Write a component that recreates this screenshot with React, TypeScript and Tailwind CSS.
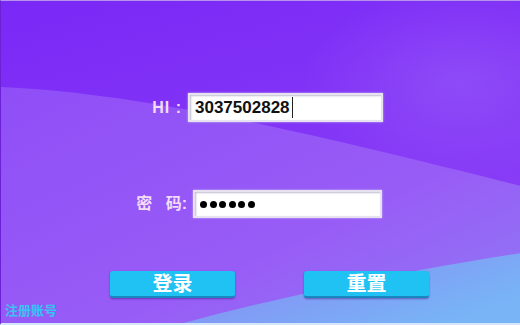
import React from "react";

function Backdrop() {
  return (
    <svg className="absolute inset-0" width="520" height="325" viewBox="0 0 520 325">
      <defs>
        <linearGradient id="bg" x1="0" y1="0" x2="0.4" y2="1">
          <stop offset="0" stopColor="#7a28f6" />
          <stop offset="1" stopColor="#8a40f6" />
        </linearGradient>
        <linearGradient id="wave1" x1="0" y1="0" x2="1" y2="1">
          <stop offset="0" stopColor="#8f4ef7" />
          <stop offset="0.6" stopColor="#985cf6" />
          <stop offset="1" stopColor="#8f7af4" />
        </linearGradient>
        <linearGradient id="wave2" x1="0" y1="0" x2="1" y2="0.6">
          <stop offset="0" stopColor="#8a84f4" />
          <stop offset="1" stopColor="#78b4f6" />
        </linearGradient>
        <radialGradient id="haze" cx="0.88" cy="0.25" r="0.3">
          <stop offset="0" stopColor="#9a60f8" stopOpacity="0.5" />
          <stop offset="1" stopColor="#9a60f8" stopOpacity="0" />
        </radialGradient>
      </defs>
      <rect width="520" height="325" fill="url(#bg)" />
      <rect width="520" height="325" fill="url(#haze)" />
      <path d="M0 86 C140 92 300 130 520 185 L520 325 L0 325 Z" fill="url(#wave1)" />
      <path d="M172 325 C260 300 400 270 520 252 L520 325 Z" fill="url(#wave2)" />
    </svg>
  );
}

export default function App() {
  const sans = { fontFamily: '"Liberation Sans", Arial, "Noto Sans CJK SC", sans-serif' };
  return (
    <div
      className="relative w-[520px] h-[325px] overflow-hidden border-t border-t-[#b493ea] border-b-2 border-b-[#d6e6fa] border-l border-l-[#6a22d4]"
      style={sans}
    >
      <Backdrop />
      <div className="relative flex flex-col pt-[92px]">
        <div className="flex items-center">
          <div className="w-[187px] pr-[6px] text-right text-[16px] font-bold text-[#f2dcf8] tracking-[1px]">HI :</div>
          <div className="w-[195px] h-[29px] bg-white border-2 border-[#e6e2f0] shadow-[0_0_2px_#c8b8f0,inset_1px_1px_2px_#c0bcd0] flex items-center pl-[5px]">
            <span className="text-[17px] font-bold text-[#111] leading-none">3037502828</span>
            <span className="ml-[2px] w-px h-[21px] bg-[#222]" />
          </div>
        </div>
        <div className="flex items-center mt-[68px]">
          <div className="w-[192px] pr-[6px] text-right text-[16px] font-bold text-[#f2dcf8]">
            密&nbsp;&nbsp;&nbsp;码:
          </div>
          <div className="w-[189px] h-[28px] bg-white border-2 border-[#e6e2f0] shadow-[0_0_2px_#c8b8f0,inset_1px_1px_2px_#c0bcd0] flex items-center gap-[2.5px] pl-[5px]">
            {[0, 1, 2, 3, 4, 5].map((i) => (
              <span key={i} className="w-[7px] h-[7px] rounded-full bg-black" />
            ))}
          </div>
        </div>
        <div className="flex mt-[53px] pl-[109px] gap-[69px]">
          <button className="w-[125px] h-[27px] rounded-[3px] bg-[#1fc2f2] border-b-2 border-b-[#1a86c0] shadow-[0_1px_2px_rgba(60,20,120,0.5)] text-white text-[20px] font-bold leading-none">
            登录
          </button>
          <button className="w-[125px] h-[27px] rounded-[3px] bg-[#1fc2f2] border-b-2 border-b-[#1a86c0] shadow-[0_1px_2px_rgba(60,20,120,0.5)] text-white text-[20px] font-bold leading-none">
            重置
          </button>
        </div>
        <div className="mt-[5px] pl-[4px] text-[13px] font-bold text-[#38c4f2] leading-[16px]">注册账号</div>
      </div>
    </div>
  );
}
